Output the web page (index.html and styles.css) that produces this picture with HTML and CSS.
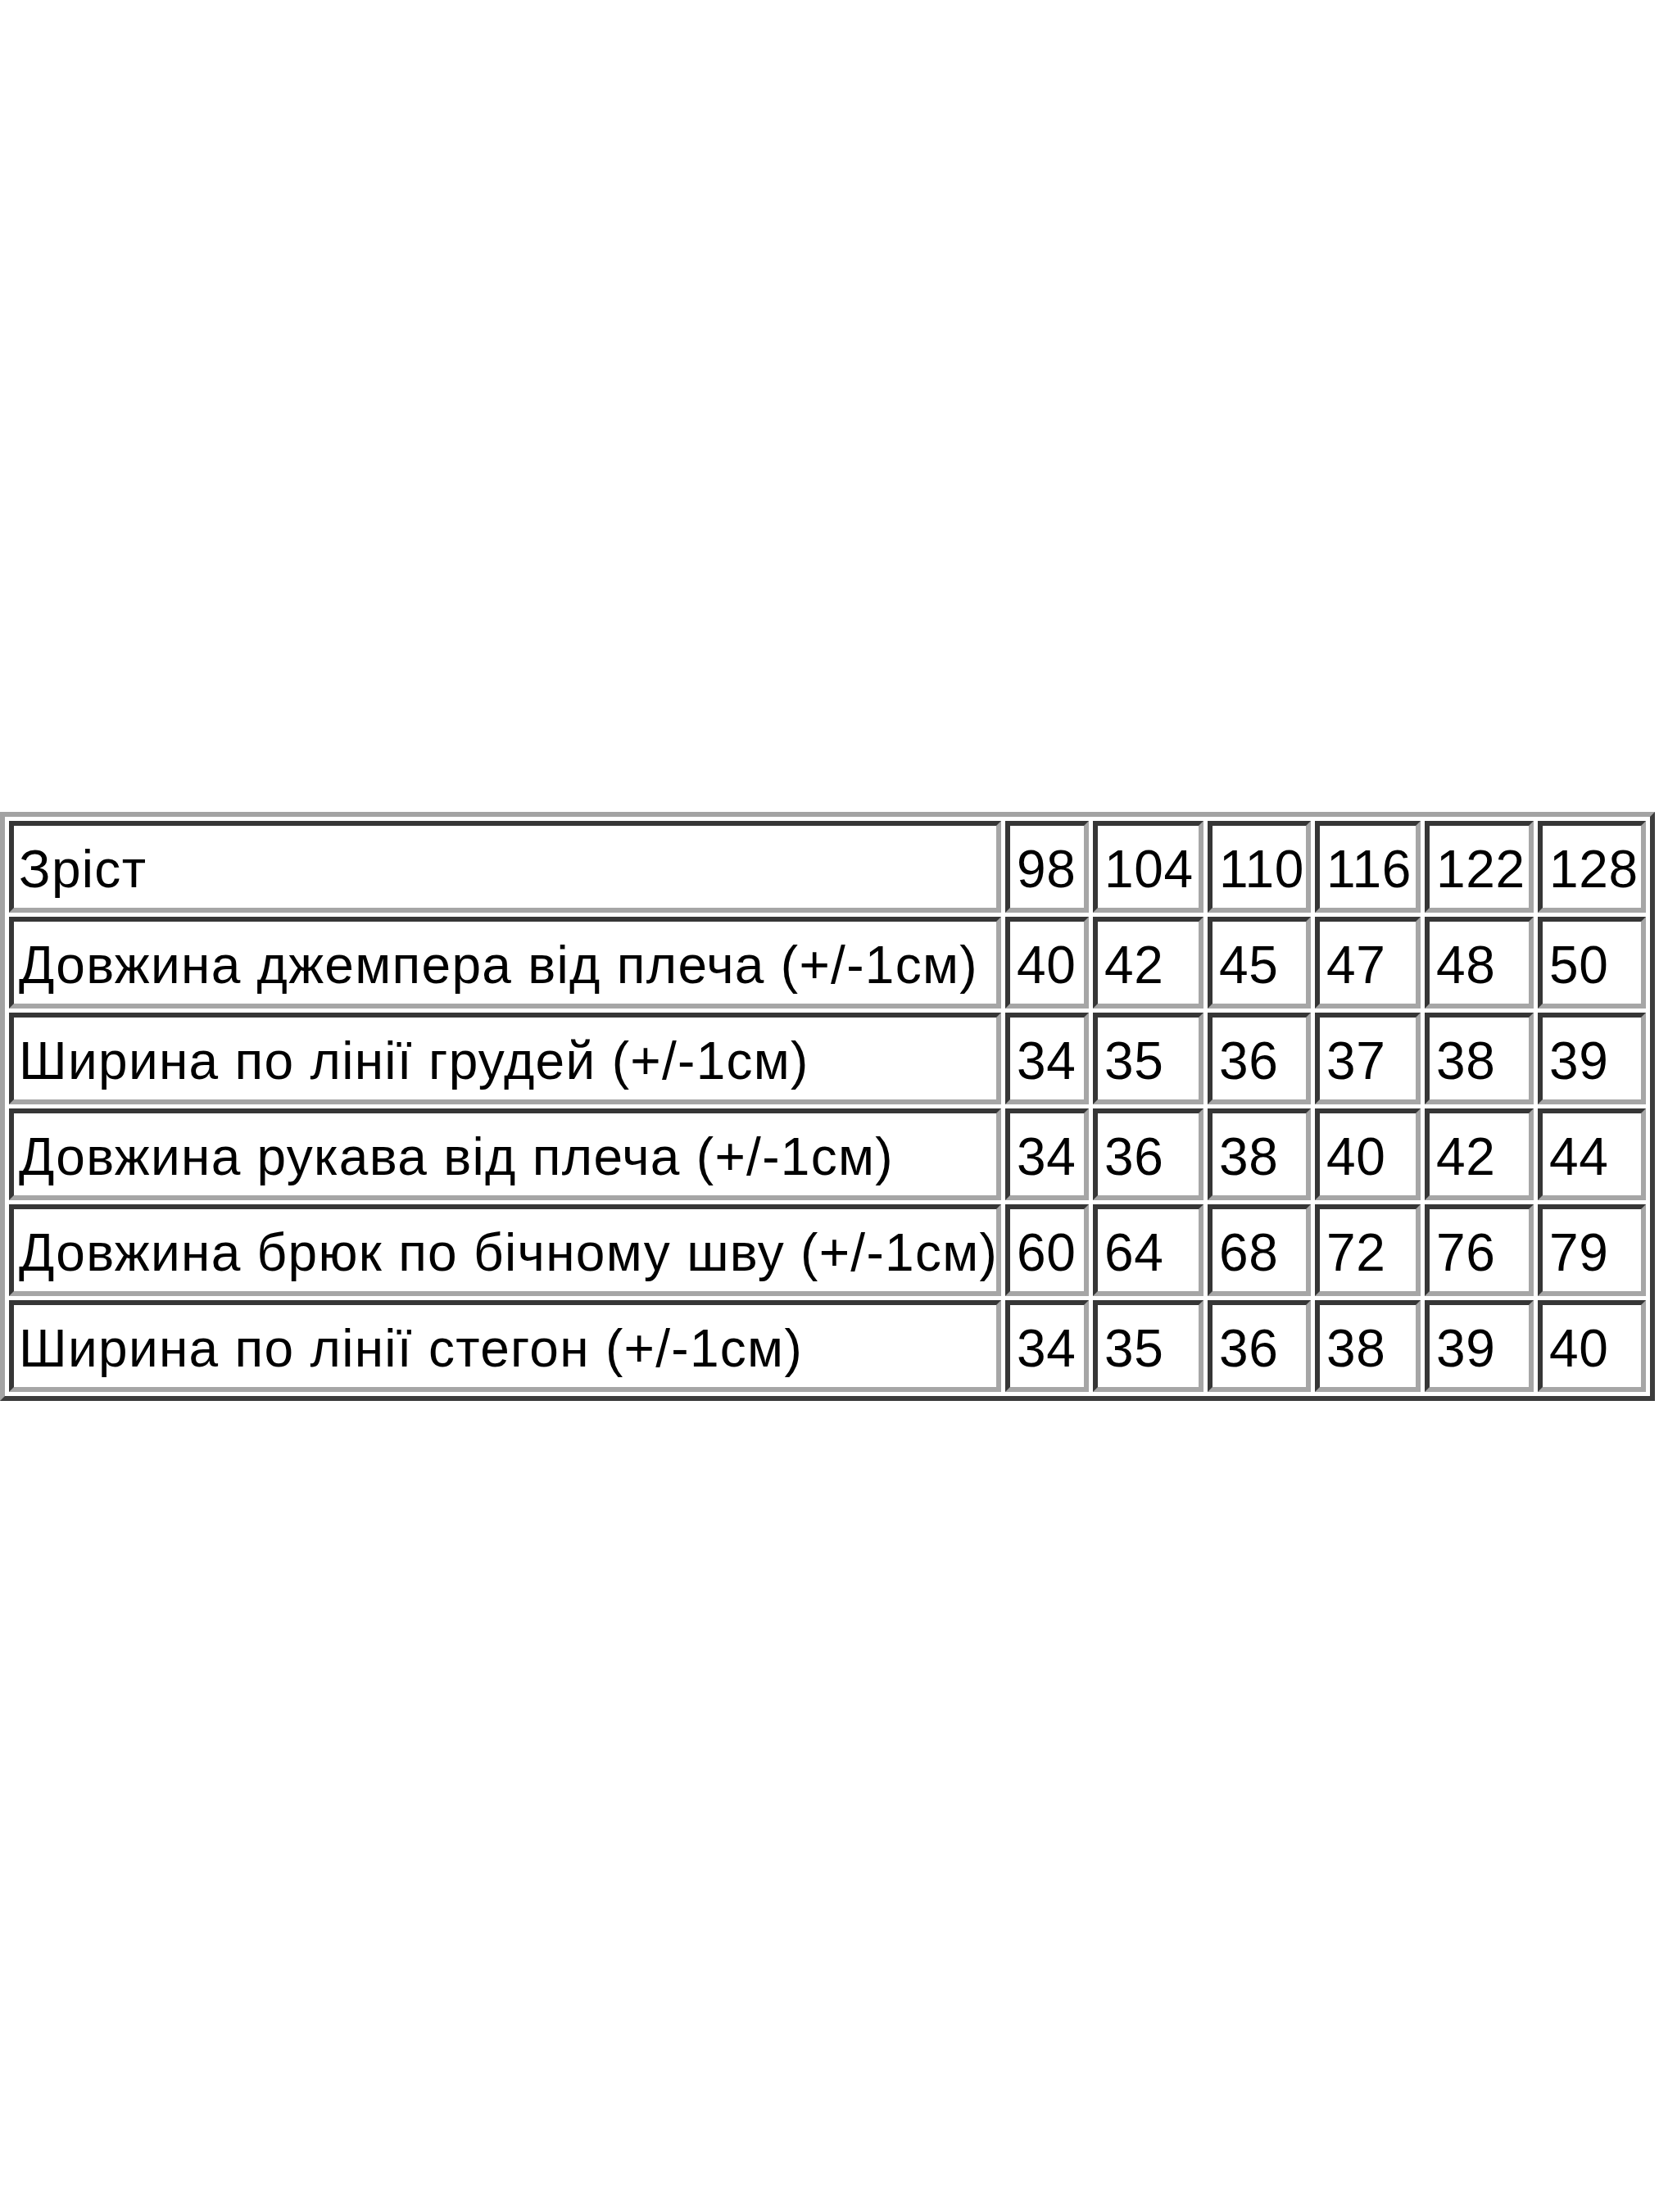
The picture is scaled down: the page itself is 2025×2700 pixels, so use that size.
FILE: index.html
```html
<!DOCTYPE html>
<html lang="uk">
<head>
<meta charset="utf-8">
<title>Розмірна сітка</title>
<link rel="stylesheet" href="styles.css">
</head>
<body>
<main class="page">
  <table class="sizes">
    <colgroup>
      <col class="c-label">
      <col class="c-98">
      <col class="c-104">
      <col class="c-110">
      <col class="c-116">
      <col class="c-122">
      <col class="c-128">
    </colgroup>
    <tbody>
      <tr><td>Зріст</td><td>98</td><td>104</td><td>110</td><td>116</td><td>122</td><td>128</td></tr>
      <tr><td>Довжина джемпера від плеча (+/-1см)</td><td>40</td><td>42</td><td>45</td><td>47</td><td>48</td><td>50</td></tr>
      <tr><td>Ширина по лінії грудей (+/-1см)</td><td>34</td><td>35</td><td>36</td><td>37</td><td>38</td><td>39</td></tr>
      <tr><td>Довжина рукава від плеча (+/-1см)</td><td>34</td><td>36</td><td>38</td><td>40</td><td>42</td><td>44</td></tr>
      <tr><td>Довжина брюк по бічному шву (+/-1см)</td><td>60</td><td>64</td><td>68</td><td>72</td><td>76</td><td>79</td></tr>
      <tr><td>Ширина по лінії стегон (+/-1см)</td><td>34</td><td>35</td><td>36</td><td>38</td><td>39</td><td>40</td></tr>
    </tbody>
  </table>
</main>
</body>
</html>
```

FILE: styles.css
```css
html, body {
  margin: 0;
  padding: 0;
  background: #ffffff;
}

.page {
  min-height: 2700px;
  display: flex;
  flex-direction: column;
  justify-content: center;
  align-items: flex-start;
}

.sizes {
  table-layout: fixed;
  width: 2020px;
  border-collapse: separate;
  border-spacing: 5px;
  border-style: solid;
  border-width: 6px;
  border-color: #a3a3a3 #3c3c3c #3c3c3c #a3a3a3;
  font-family: "Liberation Sans", Arial, sans-serif;
  font-size: 64px;
  color: #000;
}

.c-label { width: 1211px; }
.c-98 { width: 102px; }
.c-104 { width: 135px; }
.c-110 { width: 126px; }
.c-116 { width: 129px; }
.c-122 { width: 133px; }
.c-128 { width: 132px; }

.sizes td {
  box-sizing: border-box;
  height: 112px;
  padding: 8px 2px 0 8px;
  border-style: solid;
  border-width: 6px;
  border-color: #363636 #a6a6a6 #a6a6a6 #363636;
  white-space: nowrap;
  vertical-align: middle;
  line-height: 1.15;
  overflow: hidden;
  letter-spacing: 0.6px;
}

.sizes td:first-child {
  padding-left: 6px;
  letter-spacing: 1.3px;
}
```
